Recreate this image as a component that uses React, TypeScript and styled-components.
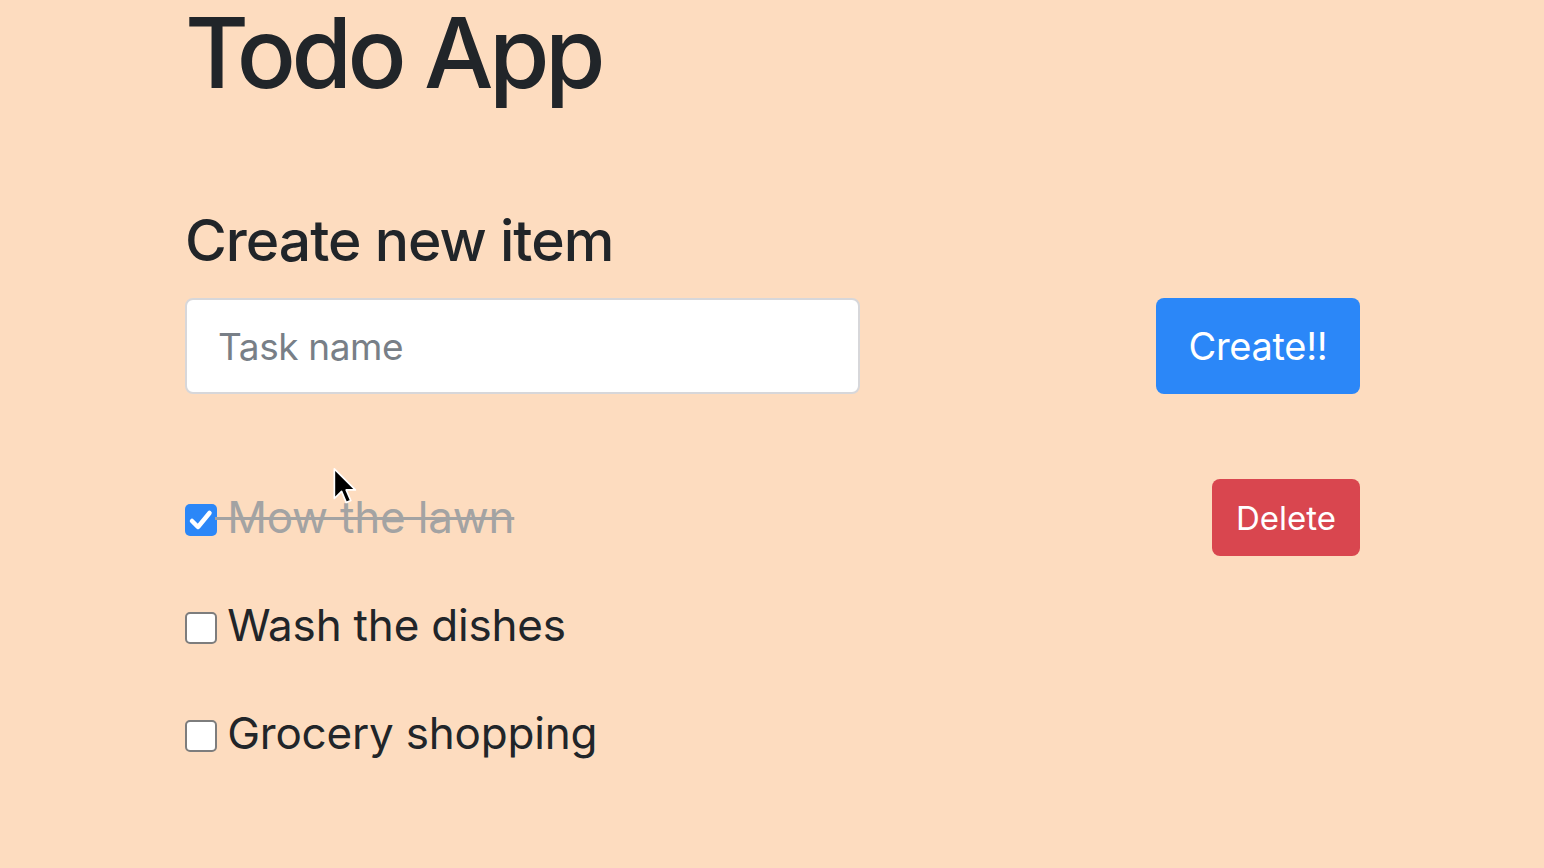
import React from "react";
import styled, { createGlobalStyle } from "styled-components";

const Global = createGlobalStyle`
  html, body {
    margin: 0;
    padding: 0;
    background: #fddcbf;
  }
  body {
    font-family: Inter, "Noto Sans", "Liberation Sans", sans-serif;
    color: #212529;
  }
`;

const Page = styled.div`
  position: relative;
  min-height: 868px;
  background: #fddcbf;
  overflow: hidden;
`;

const Container = styled.main`
  width: 1175px;
  margin-left: 185px;
  display: flex;
  flex-direction: column;
`;

const Title = styled.h1`
  margin: 4px 0 0 0;
  font-size: 98px;
  line-height: 1;
  font-weight: 500;
  letter-spacing: -4.5px;
`;

const SubTitle = styled.h2`
  margin: 105px 0 0 0;
  font-size: 57px;
  line-height: 1.2;
  font-weight: 500;
  letter-spacing: -1px;
`;

const FormRow = styled.form`
  margin-top: 23px;
  display: flex;
  justify-content: space-between;
  align-items: stretch;
`;

const TextInput = styled.input`
  box-sizing: border-box;
  width: 675px;
  height: 96px;
  padding: 0 31px;
  border: 2px solid #d7d7da;
  border-radius: 8px;
  background: #ffffff;
  font-family: inherit;
  font-size: 37px;
  letter-spacing: -0.4px;
  color: #212529;
  outline: none;
  &::placeholder {
    color: #787f87;
  }
`;

const Button = styled.button<{ $variant: "primary" | "danger" }>`
  box-sizing: border-box;
  border: none;
  border-radius: 8px;
  color: #ffffff;
  font-family: inherit;
  cursor: pointer;
  background: ${(p) => (p.$variant === "primary" ? "#2b87f8" : "#d9464f")};
`;

const CreateButton = styled(Button)`
  width: 204px;
  height: 96px;
  font-size: 38px;
  letter-spacing: -0.3px;
`;

const DeleteButton = styled(Button)`
  width: 148px;
  height: 77px;
  font-size: 33px;
`;

const List = styled.ul`
  list-style: none;
  margin: 85px 0 0 0;
  padding: 0;
  display: flex;
  flex-direction: column;
  gap: 31px;
`;

const Row = styled.li`
  display: flex;
  justify-content: space-between;
  align-items: center;
  height: 77px;
`;

const Label = styled.label`
  display: inline-flex;
  align-items: center;
  font-size: 44px;
  line-height: 1.2;
`;

const Box = styled.span<{ $checked: boolean }>`
  box-sizing: border-box;
  width: 32px;
  height: 32px;
  margin-top: 5px;
  border-radius: 5px;
  display: inline-flex;
  align-items: center;
  justify-content: center;
  background: ${(p) => (p.$checked ? "#2b87f8" : "#ffffff")};
  border: ${(p) => (p.$checked ? "none" : "2px solid #7d7d7d")};
  flex-shrink: 0;
`;

const ItemText = styled.span<{ $done: boolean }>`
  white-space: pre;
  margin-left: -2px;
  letter-spacing: -0.2px;
  color: ${(p) => (p.$done ? "#a3a3a3" : "#212529")};
  text-decoration: ${(p) => (p.$done ? "line-through" : "none")};
  text-decoration-thickness: 3px;
`;

const Cursor = styled.svg`
  position: absolute;
  left: 332px;
  top: 467px;
`;

const items = [
  { name: "Mow the lawn", done: true },
  { name: "Wash the dishes", done: false },
  { name: "Grocery shopping", done: false },
];

export default function App() {
  return (
    <Page>
      <Global />
      <Container>
        <Title>Todo App</Title>
        <SubTitle>Create new item</SubTitle>
        <FormRow onSubmit={(e) => e.preventDefault()}>
          <TextInput placeholder="Task name" />
          <CreateButton $variant="primary" type="submit">
            Create!!
          </CreateButton>
        </FormRow>
        <List>
          {items.map((it) => (
            <Row key={it.name}>
              <Label>
                <Box $checked={it.done}>
                  {it.done && (
                    <svg width="28" height="28" viewBox="0 0 28 28">
                      <path
                        d="M5 15 L11 21 L22.5 7"
                        fill="none"
                        stroke="#ffffff"
                        strokeWidth="4.5"
                        strokeLinecap="round"
                        strokeLinejoin="round"
                      />
                    </svg>
                  )}
                </Box>
                <ItemText $done={it.done}>{"\u00a0" + it.name}</ItemText>
              </Label>
              {it.done && <DeleteButton $variant="danger">Delete</DeleteButton>}
            </Row>
          ))}
        </List>
      </Container>
      <Cursor width="27" height="42" viewBox="0 0 20 32">
        <path
          d="M1.5 1.5 L1.5 24 L7 18.5 L10.5 27 L14 25.5 L10.5 17.5 L17.5 17.5 Z"
          fill="#000000"
          stroke="#ffffff"
          strokeWidth="1.3"
          strokeLinejoin="round"
        />
      </Cursor>
    </Page>
  );
}
